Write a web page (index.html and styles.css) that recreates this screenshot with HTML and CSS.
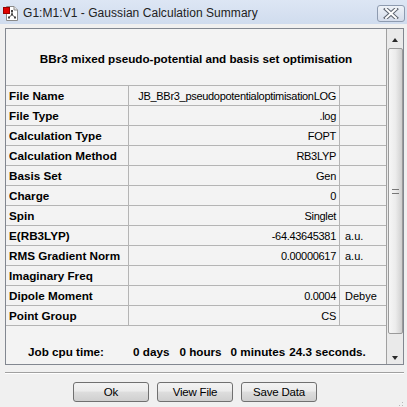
FILE: index.html
```html
<!DOCTYPE html>
<html>
<head>
<meta charset="utf-8">
<link rel="stylesheet" href="styles.css">
</head>
<body>
<div class="window">
  <div class="titlebar">
    <svg class="appicon" width="16" height="16" viewBox="0 0 16 16">
      <path d="M3.5 1.5 H11 L14.5 5 V15.5 H3.5 Z" fill="#fff" stroke="#8a8a8a"/>
      <path d="M11 1.5 V5 H14.5" fill="#e8e8e8" stroke="#8a8a8a"/>
      <path d="M9 6 V9.5 L6 12.5 M9 9.5 L12 12.5" stroke="#555" stroke-width="1" fill="none"/>
      <rect x="8" y="5" width="2" height="2" fill="#444"/>
      <rect x="8" y="8.5" width="2" height="2" fill="#444"/>
      <rect x="5" y="11.5" width="2" height="2" fill="#444"/>
      <rect x="11" y="11.5" width="2" height="2" fill="#444"/>
      <rect x="0.5" y="2.5" width="6" height="6" fill="#e00000" stroke="#900"/>
    </svg>
    <span class="title">G1:M1:V1 - Gaussian Calculation Summary</span>
    <div class="close">
      <svg width="18" height="11" viewBox="0 0 18 11">
        <path d="M4 1 L14 10 M14 1 L4 10" stroke="#5d6470" stroke-width="4" stroke-linecap="square"/>
        <path d="M4 1 L14 10 M14 1 L4 10" stroke="#ffffff" stroke-width="2" stroke-linecap="square"/>
      </svg>
    </div>
  </div>
  <div class="client">
    <div class="panel">
      <div class="content">
        <div class="heading">BBr3 mixed pseudo-potential and basis set optimisation</div>
        <div class="grid">
          <div class="lbl">File Name</div><div class="val">JB_BBr3_pseudopotentialoptimisationLOG</div><div class="unit"></div>
          <div class="lbl">File Type</div><div class="val">.log</div><div class="unit"></div>
          <div class="lbl">Calculation Type</div><div class="val">FOPT</div><div class="unit"></div>
          <div class="lbl">Calculation Method</div><div class="val">RB3LYP</div><div class="unit"></div>
          <div class="lbl">Basis Set</div><div class="val">Gen</div><div class="unit"></div>
          <div class="lbl">Charge</div><div class="val">0</div><div class="unit"></div>
          <div class="lbl">Spin</div><div class="val">Singlet</div><div class="unit"></div>
          <div class="lbl">E(RB3LYP)</div><div class="val">-64.43645381</div><div class="unit">a.u.</div>
          <div class="lbl">RMS Gradient Norm</div><div class="val">0.00000617</div><div class="unit">a.u.</div>
          <div class="lbl">Imaginary Freq</div><div class="val"></div><div class="unit"></div>
          <div class="lbl">Dipole Moment</div><div class="val">0.0004</div><div class="unit">Debye</div>
          <div class="lbl">Point Group</div><div class="val">CS</div><div class="unit"></div>
        </div>
        <div class="cpu">
          <span class="c1">Job cpu time:</span>
          <span class="c2">0 days</span>
          <span class="c3">0 hours</span>
          <span class="c4">0 minutes</span>
          <span class="c5">24.3 seconds.</span>
        </div>
      </div>
      <div class="scrollbar">
        <div class="sbtn"><span class="up"></span></div>
        <div class="track">
          <div class="thumb"><span class="grip"></span></div>
        </div>
        <div class="sbtn"><span class="down"></span></div>
      </div>
    </div>
    <div class="sep"></div>
    <div class="buttons">
      <div class="btn">Ok</div>
      <div class="btn">View File</div>
      <div class="btn">Save Data</div>
    </div>
    <div class="grip-corner">
      <svg width="8" height="8" viewBox="0 0 8 8">
        <rect x="6" y="0" width="1" height="1" fill="#b8b8b8"/>
        <rect x="3" y="3" width="1" height="1" fill="#b8b8b8"/>
        <rect x="6" y="3" width="1" height="1" fill="#b8b8b8"/>
        <rect x="0" y="6" width="1" height="1" fill="#b8b8b8"/>
        <rect x="3" y="6" width="1" height="1" fill="#b8b8b8"/>
        <rect x="6" y="6" width="1" height="1" fill="#b8b8b8"/>
      </svg>
    </div>
  </div>
</div>
</body>
</html>
```

FILE: styles.css
```css
html, body {
  margin: 0;
  padding: 0;
}
body {
  width: 407px;
  height: 407px;
  overflow: hidden;
  background: #eceef2;
  font-family: "Liberation Sans", Arial, sans-serif;
  color: #000;
}
.window {
  width: 407px;
  height: 407px;
  display: flex;
  flex-direction: column;
  background: #d9e2f0;
}
.titlebar {
  height: 24px;
  display: flex;
  align-items: center;
  position: relative;
  background: linear-gradient(#dde6f4, #d0dcee);
}
.appicon {
  margin-left: 3px;
  margin-top: 1px;
}
.title {
  margin-left: 4px;
  font-family: "Liberation Sans", Arial, sans-serif;
  font-size: 12px;
  color: #222;
  letter-spacing: 0.05px;
  margin-top: 2px;
}
.close {
  position: absolute;
  left: 377px;
  top: 5px;
  width: 26px;
  height: 15px;
  border: 1px solid #8e9bb0;
  border-radius: 3px;
  background: linear-gradient(#eef2f8, #d4dceb);
  display: flex;
  align-items: center;
  justify-content: center;
}
.client {
  flex: 1;
  background: #f0f0f0;
  padding: 4px 0 0 5px;
  position: relative;
}
.panel {
  width: 397px;
  height: 335px;
  border: 1px solid #828790;
  display: flex;
  background: #f3f3f3;
}
.content {
  width: 380px;
  display: flex;
  flex-direction: column;
  border-right: 1px solid #a0a0a0;
}
.heading {
  height: 56px;
  display: flex;
  align-items: center;
  justify-content: center;
  font-weight: bold;
  font-size: 11.7px;
  padding-top: 3px;
  box-sizing: border-box;
}
.grid {
  display: grid;
  grid-template-columns: 123px 211px 46px;
  grid-auto-rows: 20px;
  border-top: 1px solid #b4b4b4;
}
.grid > div {
  border-bottom: 1px solid #b4b4b4;
  display: flex;
  align-items: center;
  white-space: nowrap;
  box-sizing: border-box;
  overflow: hidden;
}
.lbl {
  border-right: 1px solid #b4b4b4;
  font-weight: bold;
  font-size: 11.7px;
  padding-left: 3px;
}
.val {
  border-right: 1px solid #b4b4b4;
  justify-content: flex-end;
  font-size: 11px;
  letter-spacing: -0.3px;
  padding-right: 3px;
}
.unit {
  font-size: 11px;
  padding-left: 5px;
}
.cpu {
  flex: 1;
  display: flex;
  align-items: flex-end;
  padding-bottom: 6px;
  font-weight: bold;
  font-size: 11.7px;
  white-space: nowrap;
}
.c1 { margin-left: 22px; width: 105px; }
.c3 { margin-left: 10px; }
.c4 { margin-left: 9px; }
.c5 { margin-left: 4px; }
.scrollbar {
  width: 17px;
  display: flex;
  flex-direction: column;
  background: #eaeaea;
}
.sbtn {
  height: 18px;
  display: flex;
  align-items: center;
  justify-content: center;
}
.up {
  width: 0;
  height: 0;
  border-left: 3.5px solid transparent;
  border-right: 3.5px solid transparent;
  border-bottom: 4px solid #2a2a2a;
  margin-top: 3px;
}
.down {
  width: 0;
  height: 0;
  border-left: 3.5px solid transparent;
  border-right: 3.5px solid transparent;
  border-top: 4px solid #2a2a2a;
  margin-top: 5px;
}
.track {
  flex: 1;
  padding: 1px 0 12px 1px;
  display: flex;
}
.thumb {
  width: 13px;
  flex: 1;
  border: 1px solid #9a9a9a;
  border-radius: 2px;
  background: linear-gradient(90deg, #f6f6f6, #ececec 50%, #d8d8d8 85%, #cdcdcd);
  display: flex;
  align-items: center;
  justify-content: center;
}
.grip {
  width: 7px;
  height: 5px;
  border-top: 1px solid #777;
  border-bottom: 1px solid #777;
  position: relative;
  box-sizing: border-box;
}
.sep {
  margin-top: 7px;
  width: 399px;
  height: 0;
  border-top: 1px solid #a0a0a0;
  border-bottom: 1px solid #ffffff;
}
.buttons {
  display: flex;
  gap: 8px;
  padding-left: 68px;
  margin-top: 8px;
}
.btn {
  width: 74px;
  height: 18px;
  border: 1px solid #707070;
  border-radius: 3px;
  background: linear-gradient(#f3f3f3, #ebebeb 45%, #dddddd 50%, #cfcfcf);
  font-size: 11.5px;
  letter-spacing: -0.2px;
  display: flex;
  align-items: center;
  justify-content: center;
}
.grip-corner {
  position: absolute;
  right: 3px;
  bottom: 3px;
  width: 8px;
  height: 8px;
}
```
